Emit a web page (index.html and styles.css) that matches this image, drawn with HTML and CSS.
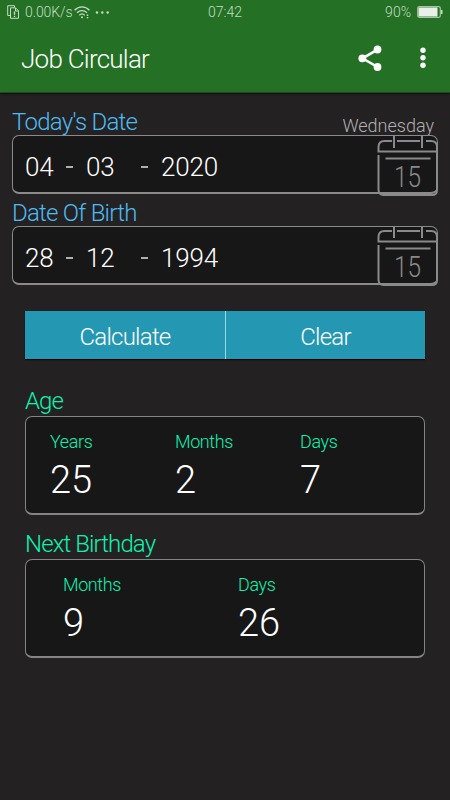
FILE: index.html
```html
<!DOCTYPE html>
<html lang="en">
<head>
    <meta charset="UTF-8">
    <title>Job Circular</title>
    <link rel="stylesheet" href="styles.css">
</head>
<body>
    <header class="header">
        <div class="status">
            <div class="status-left">
                <svg width="13" height="14" viewBox="0 0 13 14" fill="none" stroke="#c3dcc3">
                    <path d="M3 10.500H.7V.7h6.800V2.500M3.500 2.800h5l3 3v7.500h-8z M8.500 3v3h3"/>
                    <path d="M7.500 6.500v3.200M7.500 10.700v1.300" stroke-width="1.400"/>
                </svg>
                <span class="speed">0.00K/s</span>
                <svg class="wifi" width="16" height="13" viewBox="0 0 16 13" fill="none" stroke="#c3dcc3" stroke-width="1.300">
                    <path d="M.6 4.300C4.800-.2 11.200-.2 15.400 4.300M3 6.800c2.900-3 7.100-3 10 0M5.300 9.200c1.600-1.600 3.800-1.600 5.400 0"/>
                    <circle cx="8" cy="11.300" r="1" fill="#c3dcc3" stroke="none"/>
                    <path d="M13.500 8.500v1.500M13.500 11v1.200" stroke-width="1.500"/>
                </svg>
                <svg class="more" width="15" height="3" viewBox="0 0 15 3" fill="#c3dcc3">
                    <circle cx="2" cy="1.500" r="1.200"/>
                    <circle cx="7.300" cy="1.500" r="1.200"/>
                    <circle cx="12.700" cy="1.500" r="1.200"/>
                </svg>
            </div>
            <span class="clock">07:42</span>
            <div class="status-right">
                <span class="percent">90%</span>
                <svg width="26" height="12" viewBox="0 0 26 12">
                    <rect x=".7" y=".7" width="22.600" height="10.600" rx="1.500" fill="none" stroke="#a5c6a5" stroke-width="1.200"/>
                    <rect x="1.500" y="1.500" width="19" height="9" fill="#e9efe9"/>
                    <path d="M24 4h1.500v4H24z" fill="#c3dcc3"/>
                </svg>
            </div>
        </div>
        <div class="appbar">
            <h1>Job Circular</h1>
            <svg class="share" width="24" height="26" viewBox="0 0 24 26">
                <path d="M19.500 4.600L4.500 13.300l15 8.700" fill="none" stroke="#fff" stroke-width="2.600"/>
                <circle cx="4.300" cy="13.300" r="3.900" fill="#fff"/>
                <circle cx="19.500" cy="4.500" r="3.900" fill="#fff"/>
                <circle cx="19.500" cy="22" r="3.900" fill="#fff"/>
            </svg>
            <svg class="menu" width="6" height="22" viewBox="0 0 6 22" fill="#fff">
                <circle cx="3" cy="3.200" r="2.700"/>
                <circle cx="3" cy="10.700" r="2.700"/>
                <circle cx="3" cy="18.200" r="2.700"/>
            </svg>
        </div>
    </header>

    <main>
        <section class="field">
            <div class="field-head">
                <span class="label">Today's Date</span>
                <span class="weekday">Wednesday</span>
            </div>
            <div class="date-box">
                <span class="day">04</span><span class="dash"></span>
                <span class="month">03</span><span class="dash"></span>
                <span class="year">2020</span>
                <svg class="calendar" width="62" height="60" viewBox="0 0 62 60" fill="none" stroke="#8a8a8a" stroke-width="2">
                    <path d="M15 5H7.500Q1.500 5 1.500 11v4.500h58.500V11q0-6-6-6h-5M20 5h23"/>
                    <path d="M17 0v12M45 0v12"/>
                    <path d="M1.500 19v34.500Q1.500 59 6.500 59h48.500q5 0 5-5V16"/>
                    <path d="M8.500 22.500h45"/>
                    <text x="17" y="50.500" textLength="27" lengthAdjust="spacingAndGlyphs">15</text>
                </svg>
            </div>
        </section>

        <section class="field">
            <div class="field-head">
                <span class="label">Date Of Birth</span>
            </div>
            <div class="date-box">
                <span class="day">28</span><span class="dash"></span>
                <span class="month">12</span><span class="dash"></span>
                <span class="year">1994</span>
                <svg class="calendar" width="62" height="60" viewBox="0 0 62 60" fill="none" stroke="#8a8a8a" stroke-width="2">
                    <path d="M15 5H7.500Q1.500 5 1.500 11v4.500h58.500V11q0-6-6-6h-5M20 5h23"/>
                    <path d="M17 0v12M45 0v12"/>
                    <path d="M1.500 19v34.500Q1.500 59 6.500 59h48.500q5 0 5-5V16"/>
                    <path d="M8.500 22.500h45"/>
                    <text x="17" y="50.500" textLength="27" lengthAdjust="spacingAndGlyphs">15</text>
                </svg>
            </div>
        </section>

        <div class="buttons">
            <button>Calculate</button>
            <button>Clear</button>
        </div>

        <section class="result age">
            <h2>Age</h2>
            <div class="result-box">
                <div class="item"><span>Years</span><b>25</b></div>
                <div class="item"><span>Months</span><b>2</b></div>
                <div class="item"><span>Days</span><b>7</b></div>
            </div>
        </section>

        <section class="result birthday">
            <h2>Next Birthday</h2>
            <div class="result-box">
                <div class="item"><span>Months</span><b>9</b></div>
                <div class="item"><span>Days</span><b>26</b></div>
            </div>
        </section>
    </main>
</body>
</html>
```
FILE: styles.css
```css
* {
    box-sizing: border-box;
}
body {
    margin: 0;
    height: 800px;
    overflow: hidden;
    background: #242122;
    color: white;
    font-family: Roboto, "Liberation Sans", sans-serif;
    font-weight: 300;
}
svg {
    display: block;
    flex: none;
}
.header {
    height: 93px;
    background: #247024;
    border-bottom: 1px solid #1b4a1c;
    box-shadow: 0 1px 2px rgba(0, 0, 0, 0.6);
}
.status {
    height: 24px;
    display: grid;
    grid-template-columns: 1fr auto 1fr;
    align-items: center;
    padding: 0 7px;
    color: #c3dcc3;
    font-size: 14px;
    line-height: 24px;
}
.status-left, .status-right {
    display: flex;
    align-items: center;
}
.speed {
    margin: 0 2px 0 5px;
    letter-spacing: -0.1px;
}
.more {
    margin-left: 5px;
}
.status-right {
    justify-content: flex-end;
    gap: 6px;
}
.appbar {
    height: 68px;
    display: flex;
    align-items: center;
    padding: 2px 24px 0 21px;
}
h1 {
    flex: 1;
    margin: 0;
    font-size: 26px;
    font-weight: 300;
    letter-spacing: -0.75px;
    line-height: 34px;
}
.share {
    margin: -3px 38px 0 0;
}
.menu {
    margin-top: -2px;
}
main {
    padding-top: 15px;
}
.field {
    margin: 0 12px;
}
.field-head {
    height: 27px;
    display: flex;
    justify-content: space-between;
    padding-right: 4px;
    color: #4dbbf2;
    font-size: 24px;
    line-height: 28px;
}
.label {
    letter-spacing: -0.75px;
}
.field + .field .field-head {
    height: 32px;
    line-height: 38px;
}
.weekday {
    color: #b2b0b1;
    font-size: 18px;
    line-height: 35px;
}
.date-box {
    position: relative;
    height: 59px;
    display: flex;
    align-items: center;
    padding: 5px 0 0 12px;
    border: 1px solid #8a8a8a;
    border-bottom-width: 2px;
    border-radius: 7px;
    background: #171717;
    font-size: 26px;
    letter-spacing: -0.2px;
}
.day {
    width: 41px;
}
.month {
    width: 55px;
}
.dash {
    width: 7px;
    height: 2px;
    margin-top: 1px;
    background: #b0b0b0;
}
.month, .year {
    margin-left: 13px;
}
.calendar {
    position: absolute;
    top: 0;
    right: -2px;
}
.field + .field .calendar {
    top: -1px;
}
.calendar text {
    fill: #8a8a8a;
    stroke: none;
    font-size: 29px;
    letter-spacing: 0;
}
.buttons {
    height: 48px;
    display: flex;
    margin: 26px 25px 0;
    box-shadow: 0 1px 1px #000;
}
button {
    width: 200px;
    padding: 4px 0 0;
    border: 0;
    background: #2498b3;
    color: white;
    font: inherit;
    font-size: 24px;
    letter-spacing: -0.75px;
}
button + button {
    border-left: 1px solid #8fdbe0;
}
.result {
    margin: 0 25px;
}
h2 {
    margin: 0;
    color: #0ff2ae;
    font-size: 24px;
    font-weight: 300;
    letter-spacing: -0.9px;
}
.age h2 {
    height: 57px;
    padding-top: 28px;
    line-height: 28px;
}
.birthday h2 {
    height: 44px;
    padding-top: 15px;
    line-height: 29px;
}
.result-box {
    height: 99px;
    display: flex;
    border: 1px solid #858384;
    border-bottom-width: 2px;
    border-radius: 7px;
    background: #171717;
}
.item {
    width: 125px;
    display: flex;
    flex-direction: column;
    padding-left: 24px;
}
.birthday .item {
    width: 175px;
    padding-left: 37px;
}
.item span {
    height: 38px;
    padding-top: 12px;
    color: #0ff2ae;
    font-size: 18px;
    letter-spacing: -0.4px;
    line-height: 25px;
}
.item b {
    font-size: 38px;
    font-weight: 300;
    line-height: 50px;
}
```
